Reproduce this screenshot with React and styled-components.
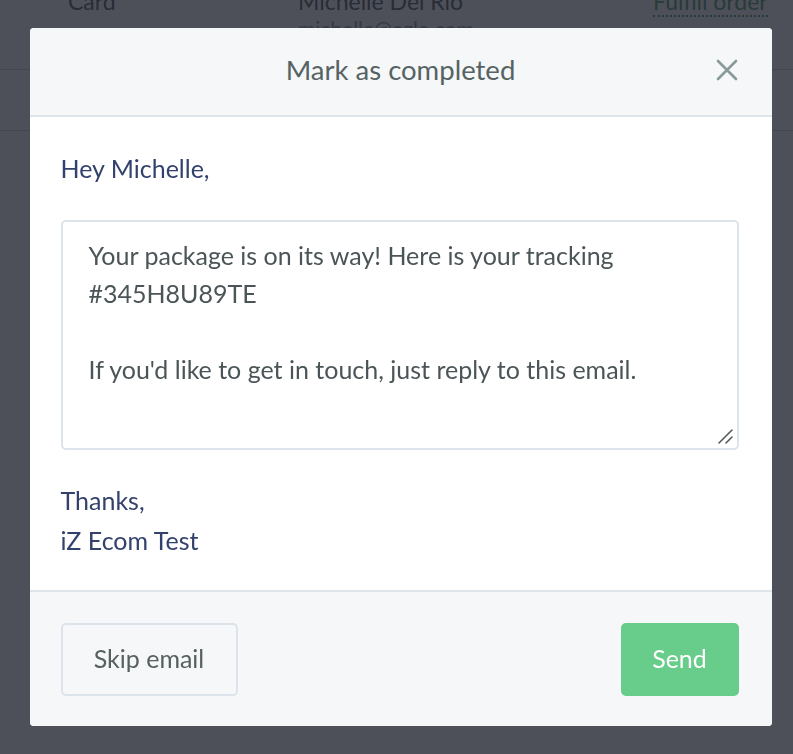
import React from 'react';
import styled, { createGlobalStyle } from 'styled-components';

const GlobalStyle = createGlobalStyle`
  html, body {
    margin: 0;
    padding: 0;
    background: #fff;
    font-family: Lato, "Open Sans", sans-serif;
  }
  * { box-sizing: border-box; }
`

// Page behind the overlay
const PageTable = styled.div`
  width: 100%;
  margin-top: -24px;
`

const TableRow = styled.div`
  display: grid;
  grid-template-columns: 230px 340px 1fr;
  height: 94px;
  padding: 10px 0 0 68px;
  border-bottom: 1px solid #c8ccd2;
  &:last-child { height: 61px; }
`

const Cell = styled.div`
  font-size: 23px;
  line-height: 30px;
  color: #333b44;
`

const SubText = styled.div`
  font-size: 21px;
  line-height: 26px;
  color: #7b828c;
  margin-top: 0;
`

const Link = styled.span`
  color: #2f8a55;
  font-size: 23px;
  border-bottom: 2px dotted #2f8a55;
  margin-left: 15px;
`

// Modal
const Overlay = styled.div`
  position: fixed;
  inset: 0;
  background: rgba(38, 42, 51, 0.82);
  display: flex;
  justify-content: center;
  align-items: flex-start;
  padding-top: 28px;
`

const Modal = styled.div`
  width: 742px;
  margin-left: 8px;
  background: #fff;
  border-radius: 4px;
  overflow: hidden;
  display: flex;
  flex-direction: column;
`

const Header = styled.div`
  height: 89px;
  background: #f5f7f9;
  border-bottom: 2px solid #dfe5eb;
  display: flex;
  align-items: center;
  justify-content: center;
  position: relative;
`

const Title = styled.h2`
  margin: 0 0 4px;
  font-weight: 400;
  font-size: 27.5px;
  color: #566363;
`

const CloseButton = styled.button`
  position: absolute;
  right: 32px;
  top: 29px;
  width: 26px;
  height: 26px;
  padding: 0;
  border: none;
  background: none;
  cursor: pointer;
  display: flex;
  align-items: center;
  justify-content: center;
`

const Body = styled.div`
  padding: 36px 33px 30px 31px;
  display: flex;
  flex-direction: column;
`

const Greeting = styled.p`
  margin: 0 0 37px;
  font-size: 25px;
  line-height: 30px;
  color: #33416d;
`

const MessageBox = styled.div`
  position: relative;
  height: 230px;
  border: 2px solid #dde3ea;
  border-radius: 5px;
  padding: 14px 26px;
  font-size: 25px;
  line-height: 38px;
  color: #4b5557;
  white-space: pre-line;
`

const Grip = styled.svg`
  position: absolute;
  right: 3px;
  bottom: 3px;
`

const Signoff = styled.p`
  margin: 30px 0 0;
  font-size: 25px;
  line-height: 40px;
  color: #33416d;
`

const Footer = styled.div`
  background: #f5f7f9;
  border-top: 2px solid #dfe5eb;
  padding: 31px 33px 30px 31px;
  display: flex;
  justify-content: space-between;
  align-items: center;
`

const Button = styled.button`
  width: ${p => p.$width}px;
  height: 73px;
  padding: 0 0 3px;
  border-radius: 5px;
  font-family: inherit;
  font-size: 25px;
  cursor: pointer;
  border: 2px solid ${p => (p.$primary ? '#68cc8a' : '#dde3ea')};
  background: ${p => (p.$primary ? '#68cc8a' : '#f5f7f9')};
  color: ${p => (p.$primary ? '#ffffff' : '#56605f')};
`

const message = `Your package is on its way! Here is your tracking
#345H8U89TE

If you'd like to get in touch, just reply to this email.`

const App = () => {
  return (
    <>
      <GlobalStyle />
      <PageTable>
        <TableRow>
          <Cell>Card</Cell>
          <Cell>
            Michelle Del Rio
            <SubText>michelle@ozlo.com</SubText>
          </Cell>
          <Cell><Link>Fulfill order</Link></Cell>
        </TableRow>
        <TableRow />
      </PageTable>
      <Overlay>
        <Modal>
          <Header>
            <Title>Mark as completed</Title>
            <CloseButton aria-label="Close">
              <svg width="22" height="22" viewBox="0 0 22 22">
                <path d="M2 2 L20 20 M20 2 L2 20" stroke="#8a9a9c" strokeWidth="2.6" strokeLinecap="round" />
              </svg>
            </CloseButton>
          </Header>
          <Body>
            <Greeting>Hey Michelle,</Greeting>
            <MessageBox>
              {message}
              <Grip width="18" height="18" viewBox="0 0 18 18">
                <path d="M3 16 L16 3 M10 16 L16 10" stroke="#555c5e" strokeWidth="1.6" strokeLinecap="round" />
              </Grip>
            </MessageBox>
            <Signoff>
              Thanks,<br />
              iZ Ecom Test
            </Signoff>
          </Body>
          <Footer>
            <Button $width={177}>Skip email</Button>
            <Button $primary $width={118}>Send</Button>
          </Footer>
        </Modal>
      </Overlay>
    </>
  );
};

export default App;
